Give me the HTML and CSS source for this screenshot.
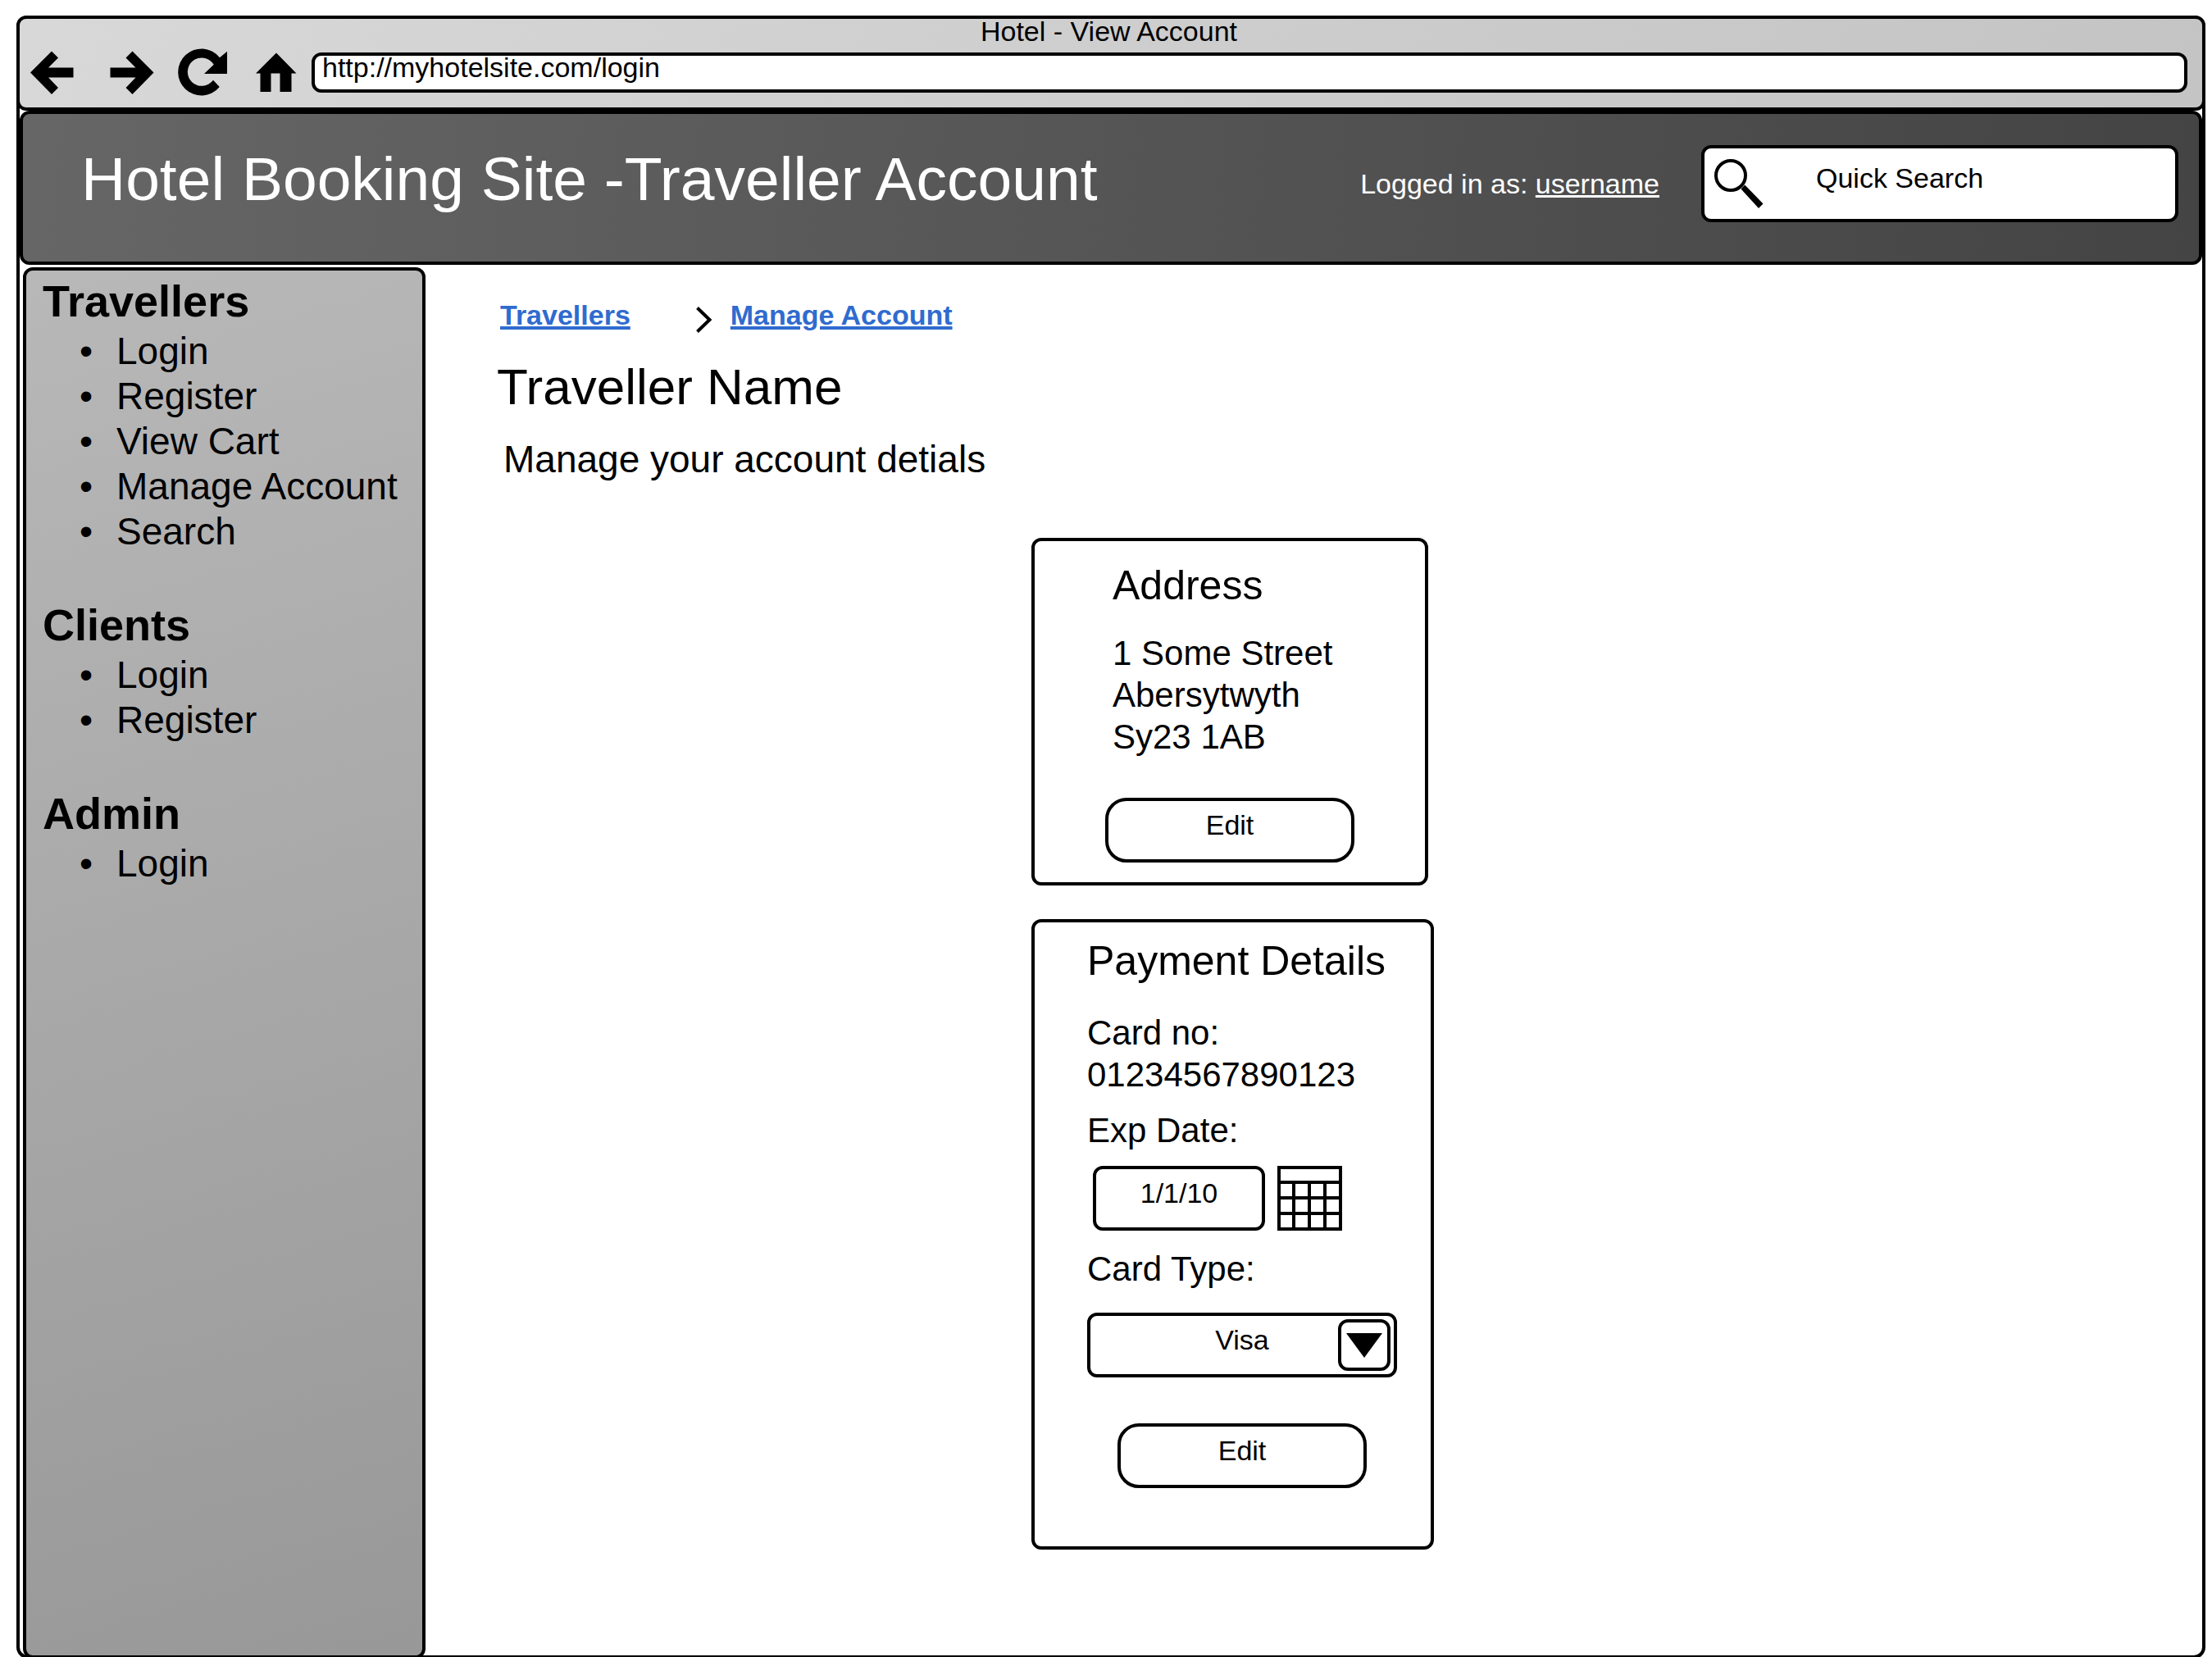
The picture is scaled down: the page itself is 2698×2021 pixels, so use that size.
FILE: index.html
```html
<!DOCTYPE html>
<html lang="en">
<head>
<meta charset="utf-8">
<meta name="viewport" content="width=device-width, initial-scale=1">
<title>Hotel - View Account</title>
<link rel="stylesheet" href="styles.css">
</head>
<body>
<div class="browser">
  <div class="chrome">
    <div class="chrome-title">Hotel - View Account</div>
    <div class="chrome-bar">
      <button class="nav-button" type="button" aria-label="Back">
        <svg width="97" height="49" viewBox="37 64 97 49"><path d="M37 88.500 63 62.500 71 70.500 59 82.500H89.500V94.500H59L71 107 63 115Z"/></svg>
      </button>
      <button class="nav-button" type="button" aria-label="Forward">
        <svg width="83" height="49" viewBox="134 64 83 49"><path d="M187.500 88.500 161.500 62.500 153.500 70.500 165.500 82.500H134.500V94.500H165.500L153.500 107 161.500 115Z"/></svg>
      </button>
      <button class="nav-button" type="button" aria-label="Reload">
        <svg width="95" height="49" viewBox="217 64 95 49"><path d="M268 70.300 277 62.700V90H249L260.700 78.700A17.200 17.200 0 1 0 260 97.700L267.800 106A28.500 28.500 0 1 1 268 70.300Z"/></svg>
      </button>
      <button class="nav-button" type="button" aria-label="Home">
        <svg width="68" height="49" viewBox="312 64 68 49"><path d="M337 64.500 361.500 89.500H355.500V112H341.500V89.500H330.500V112H317.500V89.500H312Z"/></svg>
      </button>
      <input class="url" type="text" value="http://myhotelsite.com/login" aria-label="Web address">
    </div>
  </div>

  <header class="site-header">
    <div class="site-title">Hotel Booking Site -Traveller Account</div>
    <div class="session">Logged in as: <a href="#account">username</a></div>
    <label class="search">
      <svg width="60" height="60" viewBox="0 0 60 60" aria-hidden="true"><circle cx="20" cy="20" r="18" fill="none" stroke="#000" stroke-width="4"/><path d="M32.500 36.500 37.200 31.500 59.500 54.500 54 60Z"/></svg>
      <input class="search-input" type="text" value="Quick Search" aria-label="Quick Search">
    </label>
  </header>

  <div class="page">
    <nav class="sidebar">
      <section class="menu">
        <h2>Travellers</h2>
        <ul>
          <li><a href="#login">Login</a></li>
          <li><a href="#register">Register</a></li>
          <li><a href="#cart">View Cart</a></li>
          <li><a href="#manage">Manage Account</a></li>
          <li><a href="#search">Search</a></li>
        </ul>
      </section>
      <section class="menu">
        <h2>Clients</h2>
        <ul>
          <li><a href="#client-login">Login</a></li>
          <li><a href="#client-register">Register</a></li>
        </ul>
      </section>
      <section class="menu">
        <h2>Admin</h2>
        <ul>
          <li><a href="#admin-login">Login</a></li>
        </ul>
      </section>
    </nav>

    <main class="content">
      <nav class="breadcrumb" aria-label="Breadcrumb">
        <a href="#travellers">Travellers</a>
        <svg class="chevron" width="20" height="32" viewBox="0 0 20 32" aria-hidden="true"><path d="M1.500 1.500 16.500 16 1.500 30.500" fill="none" stroke="#000" stroke-width="4"/></svg>
        <a href="#manage">Manage Account</a>
      </nav>
      <h1>Traveller Name</h1>
      <p class="intro">Manage your account detials</p>

      <div class="cards">
        <section class="card address">
          <h2>Address</h2>
          <address class="card-text">1 Some Street<br>Abersytwyth<br>Sy23 1AB</address>
          <button class="edit" type="button">Edit</button>
        </section>

        <section class="card payment">
          <h2>Payment Details</h2>
          <p class="card-text">Card no:<br>01234567890123</p>
          <label class="date-label" for="expiry">Exp Date:</label>
          <div class="date-row">
            <input class="date" id="expiry" type="text" value="1/1/10">
            <button class="calendar" type="button" aria-label="Open calendar">
              <svg width="79" height="79" viewBox="0 0 79 79"><path d="M2 2H77V77H2ZM2 20H77M2 39H77M2 58H77M20 20V77M39 20V77M58 20V77" fill="none" stroke="#000" stroke-width="4"/></svg>
            </button>
          </div>
          <label class="type-label" for="card-type">Card Type:</label>
          <div class="select">
            <select id="card-type"><option>Visa</option></select>
            <span class="select-arrow"><svg width="44" height="30" viewBox="0 0 44 30" aria-hidden="true"><path d="M0 0H44L22 30Z"/></svg></span>
          </div>
          <button class="edit" type="button">Edit</button>
        </section>
      </div>
    </main>
  </div>
</div>
</body>
</html>
```
FILE: styles.css
```css
* {
  box-sizing: border-box;
}

html {
  overflow: hidden;
}

body {
  margin: 0;
  padding: 19px 8px 0 20px;
  height: 100vh;
  overflow: hidden;
  background: #fff;
  color: #000;
  font: 34px/40px "Liberation Sans", Arial, sans-serif;
}

h1, h2, p, ul {
  margin: 0;
  padding: 0;
}

button, input, select {
  font: inherit;
  color: inherit;
}

svg {
  display: block;
  overflow: visible;
}

.browser {
  display: flex;
  flex-direction: column;
  min-height: calc(100vh - 17px);
  border: 4px solid #000;
  border-radius: 14px;
}

/* Browser chrome */
.chrome {
  margin: -4px -4px 0;
  padding: 0 18px 18px 13px;
  border: 4px solid #000;
  border-radius: 12px;
  background: linear-gradient(117deg, #d8d8d8, #c4c4c4);
}

.chrome-title {
  margin-bottom: 11px;
  line-height: 30px;
  text-align: center;
}

.chrome-bar {
  display: flex;
}

.nav-button {
  padding: 0;
  border: 0;
  background: none;
}

.url {
  flex: 1;
  min-width: 0;
  height: 49px;
  padding: 0 9px 12px;
  border: 4px solid #000;
  border-radius: 12px;
  background: #fff;
}

/* Site header */
.site-header {
  display: flex;
  align-items: center;
  height: 188px;
  padding: 0 25px 10px 71px;
  border: 4px solid #000;
  border-radius: 12px;
  background: linear-gradient(93deg, #666, #444);
  color: #fff;
}

.site-title {
  flex: 1;
  padding-bottom: 12px;
  font-size: 75px;
  line-height: 90px;
}

.session {
  margin-right: 51px;
}

.session a {
  color: inherit;
  text-decoration-thickness: 3px;
}

.search {
  display: flex;
  align-items: center;
  width: 582px;
  height: 94px;
  padding: 0 12px;
  border: 4px solid #000;
  border-radius: 12px;
  background: #fff;
  color: #000;
}

.search-input {
  flex: 1;
  min-width: 0;
  margin-left: 64px;
  padding: 0 0 14px;
  border: 0;
  background: none;
}

/* Sidebar */
.page {
  display: grid;
  flex: 1;
  grid-template-columns: 491px 1fr;
  padding: 3px 0 0 4px;
}

.sidebar {
  margin-bottom: -4px;
  padding: 4px 20px;
  border: 4px solid #000;
  border-radius: 12px;
  background: linear-gradient(164deg, #b8b8b8, #989898);
  font-size: 46px;
  line-height: 55px;
}

.menu {
  margin-bottom: 53px;
}

.menu h2 {
  font-size: 54px;
  line-height: 67px;
}

.menu ul {
  padding-left: 45px;
  list-style: none;
}

.menu li {
  display: flex;
  white-space: nowrap;
}

.menu li::before {
  content: "•";
  flex: none;
  width: 45px;
}

.menu a {
  color: inherit;
  text-decoration: none;
}

/* Main content */
.content {
  padding: 36px 0 0 87px;
}

.breadcrumb {
  display: flex;
  align-items: flex-end;
  padding-left: 4px;
  font-weight: bold;
  line-height: 44px;
}

.breadcrumb a {
  color: #306bcf;
  text-decoration-thickness: 4px;
}

.chevron {
  margin: 0 22px 0 80px;
}

h1 {
  margin-top: 30px;
  font-size: 62px;
  font-weight: normal;
  line-height: 72px;
}

.intro {
  margin-top: 24px;
  padding-left: 8px;
  font-size: 46px;
  line-height: 56px;
}

.cards {
  display: flex;
  flex-direction: column;
  align-items: flex-start;
  gap: 41px;
  margin: 68px 0 40px;
  padding-left: calc(100% * 652 / 2080);
}

.card {
  display: flex;
  flex-direction: column;
  border: 4px solid #000;
  border-radius: 12px;
  font-size: 42px;
  line-height: 51px;
}

.card h2 {
  font-size: 50px;
  font-weight: normal;
  line-height: 60px;
}

.card-text {
  font-style: normal;
}

.address {
  width: 484px;
  padding: 24px 86px;
}

.address h2,
.address .card-text {
  padding-left: 9px;
}

.address .card-text {
  margin: 27px 0 49px;
}

.payment {
  width: 491px;
  padding: 17px 41px 71px 64px;
}

.payment .card-text {
  margin: 32px 0 17px;
}

.edit {
  align-self: center;
  width: 304px;
  height: 79px;
  padding: 0 0 12px;
  border: 4px solid #000;
  border-radius: 26px;
  background: #fff;
  font-size: 34px;
}

.date-row {
  display: flex;
  gap: 15px;
  margin: 18px 0 21px;
  padding-left: 7px;
}

.date {
  width: 210px;
  height: 79px;
  padding: 0 0 12px;
  border: 4px solid #000;
  border-radius: 12px;
  background: #fff;
  font-size: 34px;
  text-align: center;
}

.calendar {
  padding: 0;
  border: 0;
  background: none;
}

.select {
  position: relative;
  margin: 28px 0 56px;
}

.select select {
  display: block;
  width: 100%;
  height: 79px;
  padding: 0 0 12px;
  border: 4px solid #000;
  border-radius: 12px;
  background: #fff;
  font-size: 34px;
  text-align: center;
  text-align-last: center;
  appearance: none;
}

.select-arrow {
  position: absolute;
  top: 8px;
  right: 8px;
  bottom: 8px;
  display: flex;
  align-items: center;
  justify-content: center;
  width: 64px;
  border: 4px solid #000;
  border-radius: 12px;
  pointer-events: none;
}
```
